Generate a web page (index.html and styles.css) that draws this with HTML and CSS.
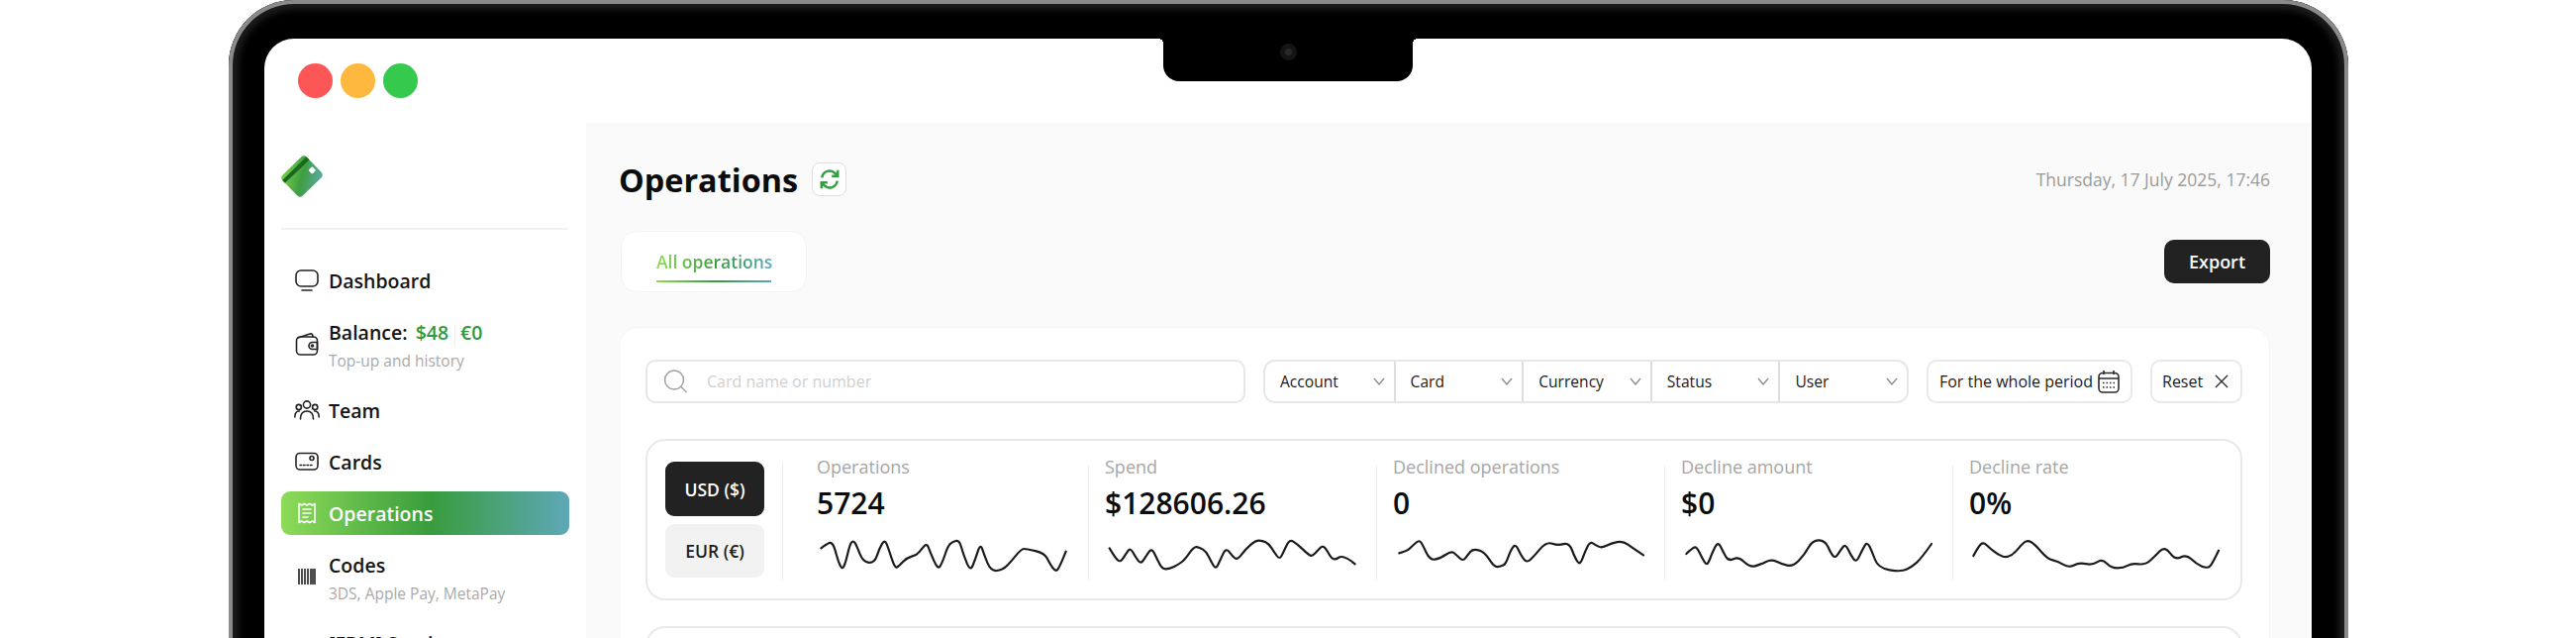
FILE: index.html
```html
<!DOCTYPE html>
<html lang="en">
<head>
<meta charset="utf-8">
<title>Operations</title>
<link rel="stylesheet" href="styles.css">
</head>
<body>
<div class="frame">
  <div class="notch"><span class="camera"></span></div>
  <div class="screen">
    <div class="titlebar">
      <span class="light red"></span><span class="light yellow"></span><span class="light green"></span>
    </div>
    <div class="app">
      <aside class="sidebar">
        <div class="logo">
          <svg class="logo-svg" viewBox="0 0 42 42">
            <defs><linearGradient id="lg" x1="0.1" y1="0" x2="0.9" y2="1"><stop offset="0" stop-color="#78cc50"/><stop offset="0.5" stop-color="#3f9d40"/><stop offset="1" stop-color="#5aa9a0"/></linearGradient></defs>
            <g transform="rotate(-44 21 21)">
              <rect x="4" y="6.500" width="34" height="29" rx="4" fill="url(#lg)"/>
              <rect x="4" y="10" width="34" height="4" fill="#17681c"/>
              <rect x="30" y="21" width="5.500" height="5.500" rx="1" fill="#fff"/>
            </g>
          </svg>
        </div>
        <nav class="nav">
          <a class="item">
            <svg class="icon" viewBox="0 0 26 26"><rect x="2" y="3" width="22" height="16" rx="5"/><path d="M8 23h10"/></svg>
            <span class="item-main"><span class="item-label">Dashboard</span></span>
          </a>
          <a class="item tall">
            <svg class="icon" viewBox="0 0 26 26"><rect x="2.500" y="6" width="21" height="18" rx="4"/><path d="M4 7l12-4c2-.5 3 .5 3 3"/><path d="M23.500 11.500h-5a3.500 3.500 0 0 0 0 7h5z"/><circle cx="18.500" cy="15" r="1"/></svg>
            <span class="item-main">
              <span class="item-label">Balance: <b class="amount first">$48</b><i class="sep"></i><b class="amount">€0</b></span>
              <span class="item-sub">Top-up and history</span>
            </span>
          </a>
          <a class="item">
            <svg class="icon" viewBox="0 0 26 26"><circle cx="13" cy="7.500" r="3.600"/><circle cx="4.800" cy="10" r="2.600"/><circle cx="21.200" cy="10" r="2.600"/><path d="M6.500 22c0-5 2.500-8 6.500-8s6.500 3 6.500 8"/><path d="M.8 20c0-3.500 1.500-6 4.500-6"/><path d="M25.200 20c0-3.500-1.500-6-4.500-6"/></svg>
            <span class="item-main"><span class="item-label">Team</span></span>
          </a>
          <a class="item">
            <svg class="icon" viewBox="0 0 26 26"><rect x="2" y="4.500" width="22" height="16.500" rx="4"/><circle cx="18" cy="9.500" r="2"/><path class="dotted" d="M6 16.500h14"/></svg>
            <span class="item-main"><span class="item-label">Cards</span></span>
          </a>
          <a class="item active">
            <svg class="icon" viewBox="0 0 26 26"><path d="M5 3.500l2.500 1.500 2.800-1.500 2.700 1.500 2.700-1.500 2.800 1.500 2.500-1.500v19l-2.500-1.500-2.800 1.500-2.700-1.500-2.700 1.500-2.800-1.500-2.500 1.500z"/><path d="M9 9h8M9 13h8M9 17h5"/></svg>
            <span class="item-main"><span class="item-label">Operations</span></span>
          </a>
          <a class="item tall">
            <svg class="icon" viewBox="0 0 26 26"><path d="M5 5.500v15M8 5.500v15M11 5.500v15M14 5.500v15M17 5.500v15M19 5.500v15M21 5.500v15"/></svg>
            <span class="item-main">
              <span class="item-label">Codes</span>
              <span class="item-sub">3DS, Apple Pay, MetaPay</span>
            </span>
          </a>
          <a class="item">
            <span class="icon"></span>
            <span class="item-main"><span class="item-label">[FBM] Services</span></span>
          </a>
        </nav>
      </aside>
      <main class="main">
        <header class="page-head">
          <div class="title-wrap">
            <h1 class="title">Operations</h1>
            <button class="refresh">
              <svg class="refresh-svg" viewBox="0 0 20 20"><path d="M3 8.500a7 7 0 0 1 12-4l2 2"/><path d="M17.500 1.500v5.500h-5.500"/><path d="M17 11.500a7 7 0 0 1-12 4l-2-2"/><path d="M2.500 18.500v-5.500h5.500"/></svg>
            </button>
          </div>
          <div class="date">Thursday, 17 July 2025, 17:46</div>
        </header>
        <div class="tabs-row">
          <div class="tab-card"><span class="tab"><span class="tab-text">All operations</span></span></div>
          <button class="export">Export</button>
        </div>
        <section class="panel">
          <div class="filters">
            <label class="search">
              <svg class="search-svg" viewBox="0 0 24 24"><circle cx="11" cy="10.500" r="9.500"/><path d="M18 17.500l5 5"/></svg>
              <span class="placeholder">Card name or number</span>
            </label>
            <div class="selects">
              <div class="select"><span>Account</span><svg class="chev" viewBox="0 0 12 8"><path d="M1 1l5 6 5-6"/></svg></div>
              <div class="select"><span>Card</span><svg class="chev" viewBox="0 0 12 8"><path d="M1 1l5 6 5-6"/></svg></div>
              <div class="select"><span>Currency</span><svg class="chev" viewBox="0 0 12 8"><path d="M1 1l5 6 5-6"/></svg></div>
              <div class="select"><span>Status</span><svg class="chev" viewBox="0 0 12 8"><path d="M1 1l5 6 5-6"/></svg></div>
              <div class="select"><span>User</span><svg class="chev" viewBox="0 0 12 8"><path d="M1 1l5 6 5-6"/></svg></div>
            </div>
            <button class="filter-btn period">For the whole period
              <svg class="cal" viewBox="0 0 22 24"><rect x="1" y="3.500" width="20" height="19.500" rx="4"/><path d="M1 9h20M6 1v4M16 1v4"/><path class="dotted" d="M5 13.500h12M5 18h12"/></svg>
            </button>
            <button class="filter-btn reset">Reset
              <svg class="x" viewBox="0 0 14 14"><path d="M1 1l12 12M13 1L1 13"/></svg>
            </button>
          </div>
          <div class="stats-card">
            <div class="currencies">
              <button class="cur cur-on">USD ($)</button>
              <button class="cur cur-off">EUR (€)</button>
            </div>
            <div class="stats">
              <div class="stat stat-first">
                <div class="stat-label">Operations</div>
                <div class="stat-value">5724</div>
                <svg class="spark" viewBox="15 0 780 150"><path d="M28 55Q45 42 51.500 39.500Q58 37 63 43.500Q68 50 74 72.500Q80 95 86 107.500Q92 120 97 110Q102 100 108.500 72.500Q115 45 120 38Q125 31 130 38Q135 45 145 71Q155 97 172.500 98.500Q190 100 197.500 77.500Q205 55 213 41.500Q221 28 226.500 41.500Q232 55 242 86Q252 117 258.500 112.500Q265 108 276.500 96Q288 84 303 80Q318 76 326.500 65.500Q335 55 342 47.500Q349 40 354.500 55Q360 70 371 95Q382 120 388.500 110Q395 100 403.500 75Q412 50 418.500 43Q425 36 436 33Q447 30 452.500 50Q458 70 469 98Q480 126 487.500 108Q495 90 503 65Q511 40 516.500 57.500Q522 75 532.500 100Q543 125 560.500 123Q578 121 589 110.500Q600 100 617.500 78.500Q635 57 642.500 57Q650 57 677.500 63.500Q705 70 712.500 85Q720 100 729 113Q738 126 744 120.500Q750 115 770 65"/></svg>
              </div>
              <div class="stat">
                <div class="stat-label">Spend</div>
                <div class="stat-value">$128606.26</div>
                <svg class="spark" viewBox="888 0 780 150"><path d="M902 55Q920 85 927.500 91.500Q935 98 942.500 86.500Q950 75 957.500 64Q965 53 972.500 66.500Q980 80 988.500 92Q997 104 1004.500 92Q1012 80 1021 67Q1030 54 1037.500 69.500Q1045 85 1053.500 102Q1062 119 1073.500 118Q1085 117 1097.500 111Q1110 105 1120 97.500Q1130 90 1144 70Q1158 50 1166.500 51.500Q1175 53 1185 59Q1195 65 1202.500 80Q1210 95 1217 107.500Q1224 120 1231 105Q1238 90 1246.500 71.500Q1255 53 1265 66.500Q1275 80 1282.500 85.500Q1290 91 1302.500 74Q1315 57 1330 44.500Q1345 32 1355 32Q1365 32 1375 37Q1385 42 1392.500 53.500Q1400 65 1409 78Q1418 91 1425 75.500Q1432 60 1440 44Q1448 28 1459 35Q1470 42 1485 56Q1500 70 1507.500 75.500Q1515 81 1525 70.500Q1535 60 1541.500 53.500Q1548 47 1554 53.500Q1560 60 1570 77.500Q1580 95 1595.500 84Q1611 73 1646 103"/></svg>
              </div>
              <div class="stat">
                <div class="stat-label">Declined operations</div>
                <div class="stat-value">0</div>
                <svg class="spark" viewBox="18 0 780 150"><path d="M37 70Q60 65 70 55Q80 45 89 37.500Q98 30 103 37.500Q108 45 119 68Q130 91 145 89Q160 87 177.500 75Q195 63 202.500 69Q210 75 220 85Q230 95 237.500 85Q245 75 252.500 66Q260 57 277.500 61Q295 65 310 89Q325 113 335 111.500Q345 110 352.500 106.500Q360 103 367.500 81.500Q375 60 382.500 51Q390 42 397.500 58.500Q405 75 414 87.500Q423 100 434 90Q445 80 464 57.500Q483 35 500.500 41Q518 47 535 42.500Q552 38 561 61.500Q570 85 577.500 96Q585 107 592.500 86Q600 65 607.500 50Q615 35 623.500 40Q632 45 641 50Q650 55 665 47.500Q680 40 697.500 36.500Q715 33 730 44Q745 55 777 76"/></svg>
              </div>
              <div class="stat">
                <div class="stat-label">Decline amount</div>
                <div class="stat-value">$0</div>
                <svg class="spark" viewBox="891 0 780 150"><path d="M907 72Q925 55 931.500 52.500Q938 50 946.500 67.500Q955 85 962.500 97.500Q970 110 977.500 90Q985 70 994 52Q1003 34 1010.500 49.500Q1018 65 1026.500 80Q1035 95 1050 87.500Q1065 80 1082.500 96.500Q1100 113 1115 109Q1130 105 1147.500 96.500Q1165 88 1180 95.500Q1195 103 1212.500 107Q1230 111 1247.500 93Q1265 75 1277.500 52.500Q1290 30 1309 31Q1328 32 1336.500 51Q1345 70 1351.500 78Q1358 86 1366.500 73Q1375 60 1382 51Q1389 42 1397 58.500Q1405 75 1413.500 87.500Q1422 100 1431 80Q1440 60 1447.500 47.500Q1455 35 1462.500 50Q1470 65 1479 90Q1488 115 1523 121Q1558 127 1574 119.500Q1590 112 1605 98.500Q1620 85 1650 42"/></svg>
              </div>
              <div class="stat">
                <div class="stat-label">Decline rate</div>
                <div class="stat-value">0%</div>
                <svg class="spark" viewBox="27 0 780 150"><path d="M40 78Q55 50 62.500 43Q70 36 80 45.500Q90 55 102.500 65Q115 75 127.500 79.500Q140 84 152.500 77Q165 70 175 57.500Q185 45 194 37.500Q203 30 214 36Q225 42 245 65Q265 88 280 91Q295 94 312.500 104.500Q330 115 345 106.500Q360 98 380 102.500Q400 107 415 97Q430 87 444 101Q458 115 476.500 115Q495 115 507.500 107.500Q520 100 540 103Q560 106 575 93Q590 80 605 64Q620 48 636 70Q652 92 668.500 82.500Q685 73 700 88Q715 103 732.500 110Q750 117 757.500 108.500Q765 100 783 62"/></svg>
              </div>
            </div>
          </div>
          <div class="next-card"></div>
        </section>
      </main>
    </div>
  </div>
</div>
</body>
</html>
```
FILE: styles.css
```css
* { box-sizing: border-box; }
html, body { margin: 0; height: 644px; overflow: hidden; background: #fff; }
body { font-family: "Open Sans", "Liberation Sans", sans-serif; color: #111; }
button { font-family: inherit; cursor: pointer; }

.frame {
  position: relative;
  margin-left: 231px;
  width: 2141px;
  height: 900px;
  padding: 39px 37px 0 36px;
  background: #000;
  border-radius: 66px;
  box-shadow: inset 0 0 0 4px #8a8a8a, inset 0 0 6px 10px #1c1c1c;
}
.notch {
  position: absolute;
  left: 944px;
  top: 39px;
  width: 252px;
  height: 43px;
  background: #000;
  border-radius: 0 0 16px 16px;
  z-index: 2;
  display: flex;
  justify-content: center;
}
.notch::before, .notch::after {
  content: "";
  position: absolute;
  top: 0;
  width: 5px;
  height: 5px;
}
.notch::before { left: -5px; background: radial-gradient(circle at 0 100%, transparent 5px, #000 5px); }
.notch::after { right: -5px; background: radial-gradient(circle at 100% 100%, transparent 5px, #000 5px); }
.camera {
  width: 17px;
  height: 17px;
  margin-top: 5px;
  border-radius: 50%;
  background: radial-gradient(circle, #2a2a2a 0 3px, #141414 4px);
}
.screen {
  background: #fff;
  border-radius: 30px 30px 0 0;
  height: 861px;
  overflow: hidden;
}
.titlebar {
  height: 85px;
  padding-left: 34px;
  display: flex;
  align-items: center;
  gap: 8px;
}
.light { width: 35px; height: 35px; border-radius: 50%; }
.red { background: #fd5656; }
.yellow { background: #ffb83f; }
.green { background: #35c94d; }

.app { display: grid; grid-template-columns: 325px 1fr; height: 776px; }

.sidebar { padding: 33px 0 0 17px; }
.logo { width: 290px; height: 75px; border-bottom: 2px solid #f1f1f1; }
.logo-svg { display: block; width: 42px; height: 42px; }
.nav { margin-top: 29px; width: 291px; display: flex; flex-direction: column; gap: 8px; }
.item {
  height: 44px;
  padding-left: 13px;
  display: flex;
  align-items: center;
  gap: 9px;
  border-radius: 9px;
  color: #141414;
}
.item.tall { height: 71px; }
.tall .icon { margin-top: -4px; }
.icon {
  flex: none;
  width: 26px;
  height: 26px;
  fill: none;
  stroke: #222;
  stroke-width: 1.6;
  stroke-linecap: round;
  stroke-linejoin: round;
}
.dotted { stroke-dasharray: 1.5 2; }
.item-main { display: flex; flex-direction: column; }
.item-label { font-size: 19.5px; font-weight: 600; line-height: 27px; white-space: nowrap; }
.item-sub { font-size: 15.5px; line-height: 22px; margin-top: 4px; color: #a9a9a9; white-space: nowrap; }
.amount { font-weight: 600; color: #2f9a3d; }
.amount.first { margin-left: 3px; }
.sep { display: inline-block; width: 1px; height: 22px; margin: 0 5px 0 6px; background: #f0f0f0; vertical-align: middle; }
.active {
  background: linear-gradient(90deg, #8edb58 0%, #389c3d 52%, #5ea8b8 100%);
  color: #fff;
}
.active .icon { stroke: #fff; }

.main { background: #fafafa; padding: 40px 44px 0 33px; }
.page-head { height: 34px; display: flex; justify-content: space-between; align-items: center; }
.title-wrap { display: flex; align-items: center; gap: 14px; }
.title { margin: 0; font-size: 32.4px; line-height: 34px; font-weight: 700; color: #0c0c0c; }
.refresh {
  width: 35px;
  height: 34px;
  padding: 0;
  background: #fff;
  border: 1px solid #dfdfdf;
  border-radius: 8px;
  display: flex;
  align-items: center;
  justify-content: center;
}
.refresh-svg { width: 22px; height: 22px; fill: none; stroke: #2f9e3e; stroke-width: 2.2; }
.date { font-size: 17.5px; color: #9a9a9a; }

.tabs-row { margin-top: 35px; display: flex; justify-content: space-between; align-items: center; }
.tab-card {
  width: 188px;
  height: 62px;
  margin-left: 2px;
  padding: 0 35px;
  background: #fff;
  border: 1px solid #f3f3f3;
  border-radius: 16px;
}
.tab {
  display: block;
  height: 52px;
  padding-top: 18px;
  position: relative;
  text-align: center;
  white-space: nowrap;
}
.tab::after {
  content: "";
  position: absolute;
  left: 0;
  right: 0;
  bottom: 1px;
  height: 2px;
  background: linear-gradient(90deg, #8edb58, #389c3d 52%, #5ea8b8);
}
.tab-text {
  font-size: 17.5px;
  font-weight: 600;
  background: linear-gradient(90deg, #8edb58, #389c3d 52%, #5ea8b8);
  -webkit-background-clip: text;
  background-clip: text;
  color: transparent;
}
.export {
  width: 107px;
  height: 44px;
  padding: 0;
  background: #222;
  color: #fff;
  border: 0;
  border-radius: 10px;
  font-size: 18px;
  font-weight: 600;
}

.panel {
  margin-top: 35px;
  height: 400px;
  padding: 32px 27px 0 26px;
  background: #fff;
  border: 1px solid #f5f5f5;
  border-radius: 20px;
}
.filters { display: flex; gap: 18px; height: 44px; align-items: stretch; }
.search {
  flex: 1;
  display: flex;
  align-items: center;
  gap: 20px;
  padding-left: 16px;
  border: 2px solid #e7e7e7;
  border-radius: 10px;
  background: #fff;
}
.search-svg { flex: none; width: 24px; height: 24px; fill: none; stroke: #a3a3a3; stroke-width: 1.6; stroke-linecap: round; }
.placeholder { font-size: 16px; color: #cfcfcf; }
.selects {
  flex: none;
  width: 652px;
  display: grid;
  grid-template-columns: repeat(5, 1fr);
  border: 2px solid #e7e7e7;
  border-radius: 12px;
}
.select {
  display: flex;
  align-items: center;
  justify-content: space-between;
  padding: 0 9px 0 15px;
  border-left: 2px solid #dedede;
  font-size: 15.6px;
  font-weight: 500;
  color: #1a1a1a;
}
.select:first-child { border-left: 0; }
.chev { flex: none; width: 12px; height: 8px; fill: none; stroke: #8f8f8f; stroke-width: 1.4; }
.filter-btn {
  flex: none;
  padding: 0;
  background: #fff;
  border: 2px solid #e9e9e9;
  border-radius: 10px;
  font-size: 16px;
  font-weight: 500;
  color: #1a1a1a;
  display: flex;
  align-items: center;
  justify-content: center;
}
.period { width: 208px; gap: 5px; }
.reset { width: 93px; gap: 12px; justify-content: flex-start; padding-left: 10px; }
.cal { width: 22px; height: 24px; fill: none; stroke: #2a2a2a; stroke-width: 1.6; }
.x { width: 14px; height: 14px; fill: none; stroke: #2a2a2a; stroke-width: 1.4; }

.stats-card {
  margin-top: 36px;
  height: 163px;
  padding-top: 14px;
  padding-left: 18px;
  display: flex;
  border: 2px solid #e9e9e9;
  border-radius: 20px;
}
.currencies {
  flex: none;
  width: 100px;
  margin-top: 7px;
  display: flex;
  flex-direction: column;
  gap: 8px;
}
.cur {
  height: 55px;
  padding: 0;
  border: 0;
  border-radius: 9px;
  font-size: 17.5px;
  font-weight: 600;
}
.cur-on { background: #222; color: #fff; }
.cur-off { background: #f2f2f2; color: #1d1d1d; height: 54px; }
.stats {
  flex: none;
  margin-left: 18px;
  display: grid;
  grid-template-columns: 309px repeat(4, 291px);
  height: 124px;
}
.stat { position: relative; padding-left: 17px; }
.stat::before {
  content: "";
  position: absolute;
  left: 0;
  top: 11px;
  bottom: 0;
  width: 1px;
  background: #ececec;
}
.stat-first { padding-left: 35px; }
.stat-first::before { top: 7px; }
.stat-label { font-size: 18px; line-height: 24px; color: #a6a6a6; white-space: nowrap; }
.stat-value { margin-top: 7px; font-size: 30px; line-height: 36px; font-weight: 600; color: #0c0c0c; white-space: nowrap; }
.spark { display: block; margin-top: 9px; width: 260px; height: 50px; fill: none; stroke: #1a1a1a; stroke-width: 6.5; stroke-linejoin: round; stroke-linecap: round; }

.next-card {
  margin-top: 26px;
  height: 120px;
  border: 2px solid #e9e9e9;
  border-radius: 20px;
}
```
